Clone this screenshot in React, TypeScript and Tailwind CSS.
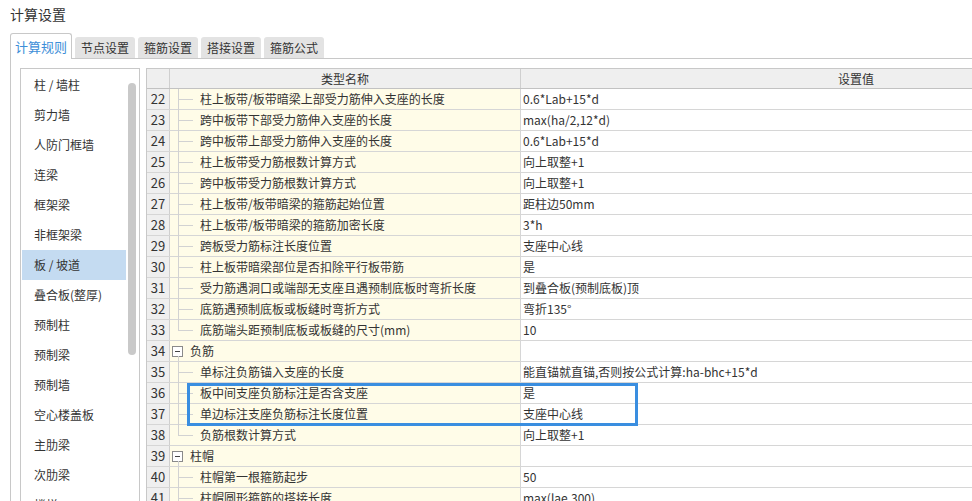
type Row = {
  no: number;
  name: string;
  value?: string;
  kind?: "group" | "item" | "last";
};

const categories = [
  "柱 / 墙柱",
  "剪力墙",
  "人防门框墙",
  "连梁",
  "框架梁",
  "非框架梁",
  "板 / 坡道",
  "叠合板(整厚)",
  "预制柱",
  "预制梁",
  "预制墙",
  "空心楼盖板",
  "主肋梁",
  "次肋梁",
  "楼梯",
];

const tabs = ["计算规则", "节点设置", "箍筋设置", "搭接设置", "箍筋公式"];

const rows: Row[] = [
  { no: 22, name: "柱上板带/板带暗梁上部受力筋伸入支座的长度", value: "0.6*Lab+15*d" },
  { no: 23, name: "跨中板带下部受力筋伸入支座的长度", value: "max(ha/2,12*d)" },
  { no: 24, name: "跨中板带上部受力筋伸入支座的长度", value: "0.6*Lab+15*d" },
  { no: 25, name: "柱上板带受力筋根数计算方式", value: "向上取整+1" },
  { no: 26, name: "跨中板带受力筋根数计算方式", value: "向上取整+1" },
  { no: 27, name: "柱上板带/板带暗梁的箍筋起始位置", value: "距柱边50mm" },
  { no: 28, name: "柱上板带/板带暗梁的箍筋加密长度", value: "3*h" },
  { no: 29, name: "跨板受力筋标注长度位置", value: "支座中心线" },
  { no: 30, name: "柱上板带暗梁部位是否扣除平行板带筋", value: "是" },
  { no: 31, name: "受力筋遇洞口或端部无支座且遇预制底板时弯折长度", value: "到叠合板(预制底板)顶" },
  { no: 32, name: "底筋遇预制底板或板缝时弯折方式", value: "弯折135°" },
  { no: 33, name: "底筋端头距预制底板或板缝的尺寸(mm)", value: "10", kind: "last" },
  { no: 34, name: "负筋", kind: "group" },
  { no: 35, name: "单标注负筋锚入支座的长度", value: "能直锚就直锚,否则按公式计算:ha-bhc+15*d" },
  { no: 36, name: "板中间支座负筋标注是否含支座", value: "是" },
  { no: 37, name: "单边标注支座负筋标注长度位置", value: "支座中心线" },
  { no: 38, name: "负筋根数计算方式", value: "向上取整+1", kind: "last" },
  { no: 39, name: "柱帽", kind: "group" },
  { no: 40, name: "柱帽第一根箍筋起步", value: "50" },
  { no: 41, name: "柱帽圆形箍筋的搭接长度", value: "max(lae,300)" },
];

function TreeCell({ row }: { row: Row }) {
  if (row.kind === "group") {
    return (
      <div className="relative flex h-full items-center pl-[2px]">
        <span className="flex h-[11px] w-[11px] items-center justify-center border border-[#8a8a8a] bg-white">
          <span className="h-px w-[5px] bg-[#444]" />
        </span>
        <span className="absolute left-[8px] top-[15px] bottom-0 w-px bg-[#d2d2d2]" />
        <span className="ml-[7px]">{row.name}</span>
      </div>
    );
  }
  return (
    <div className="relative flex h-full items-center pl-[30px]">
      <span
        className={
          row.kind === "last"
            ? "absolute left-[8px] top-0 h-[10px] w-px bg-[#d2d2d2]"
            : "absolute left-[8px] top-0 bottom-[-1px] w-px bg-[#d2d2d2]"
        }
      />
      <span className="absolute left-[8px] top-[10px] h-px w-[15px] bg-[#d2d2d2]" />
      <span className="whitespace-nowrap">{row.name}</span>
    </div>
  );
}

export default function App() {
  return (
    <div className="h-[501px] w-[972px] overflow-hidden bg-white font-['Noto_Sans_CJK_SC','Noto_Sans',sans-serif] text-[12px] text-[#333]">
      <div className="h-[33px] pl-[10px] pt-[4px] text-[14px] leading-[20px] text-[#333]">计算设置</div>

      <div className="relative z-10 flex h-[25px] items-end gap-[3px] pl-[10px]">
        {tabs.map((t, i) =>
          i === 0 ? (
            <div
              key={t}
              className="-mb-px flex h-[26px] w-[62px] items-center justify-center rounded-t-[3px] border border-b-0 border-[#c8c8c8] bg-white pt-[1px] text-[13px] text-[#3d8ed8]"
            >
              {t}
            </div>
          ) : (
            <div
              key={t}
              className="flex h-[21px] w-[60px] items-center justify-center rounded-t-[3px] bg-[#e3e3e3] pt-[1px] text-[#333]"
            >
              {t}
            </div>
          )
        )}
      </div>

      <div className="ml-[10px] flex h-[500px] gap-[6px] border-l border-t border-[#c8c8c8] pl-[9px] pt-[9px]">
        {/* left category list */}
        <div className="flex h-[480px] w-[120px] shrink-0 border border-[#c8c8c8] bg-white px-px">
          <ul className="w-[104px] pt-px">
            {categories.map((c) => (
              <li
                key={c}
                className={
                  c === "板 / 坡道"
                    ? "flex h-[30px] items-center bg-[#c4dbf1] pl-[12px]"
                    : "flex h-[30px] items-center pl-[12px]"
                }
              >
                {c}
              </li>
            ))}
          </ul>
          <div className="ml-[2px] pt-[14px]">
            <div className="h-[272px] w-[8px] rounded-full bg-[#c9c9c9]" />
          </div>
        </div>

        {/* settings grid */}
        <div className="relative w-[1045px] shrink-0 border-l border-t border-[#c8c8c8]">
          <div className="flex h-[20px] border-b border-[#c2c2c2] bg-[#efefef]">
            <div className="w-[23px] border-r border-[#cfcfcf]" />
            <div className="flex w-[351px] items-center justify-center border-r border-[#cfcfcf]">类型名称</div>
            <div className="flex w-[670px] items-center justify-center">设置值</div>
          </div>

          {rows.map((r) => (
            <div key={r.no} className="flex h-[21px] border-b border-[#d6d6d6]">
              <div className="flex w-[23px] items-center justify-center border-r border-[#cfcfcf] bg-[#efefef] text-[13px]">
                {r.no}
              </div>
              <div className="w-[351px] border-r border-[#d6d6d6] bg-[#fffce8]">
                <TreeCell row={r} />
              </div>
              <div className="flex w-[670px] items-center whitespace-nowrap pl-[2px]">{r.value}</div>
            </div>
          ))}

          <div className="pointer-events-none absolute left-[40px] top-[314px] h-[43px] w-[451px] border-[3px] border-[#3a8ee0]" />
        </div>
      </div>
    </div>
  );
}
